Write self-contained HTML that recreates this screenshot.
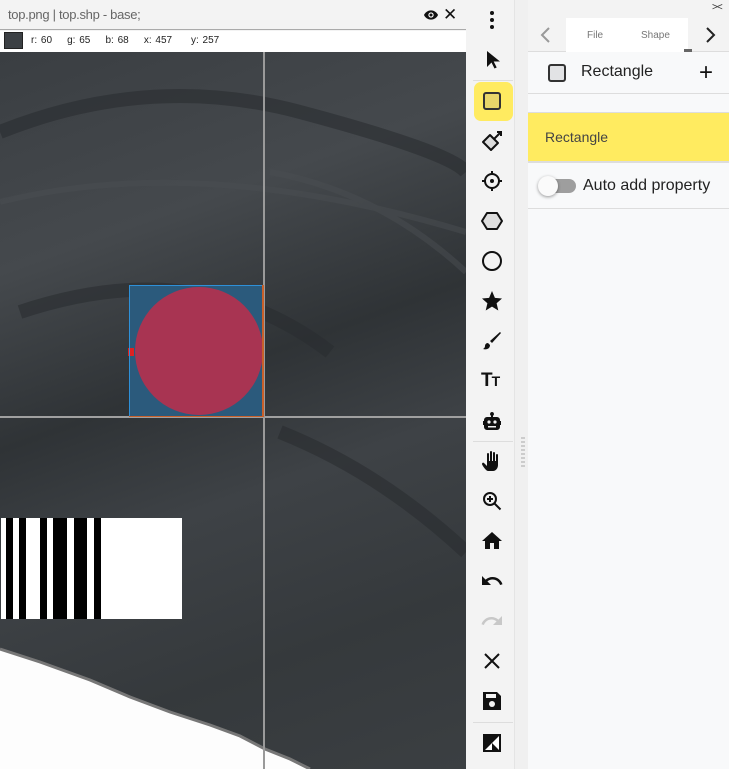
<!DOCTYPE html>
<html><head><meta charset="utf-8"><style>
*{margin:0;padding:0;box-sizing:border-box}
body{width:729px;height:769px;overflow:hidden;background:#f3f3f3;font-family:"Liberation Sans",sans-serif;position:relative}
.abs{position:absolute}
.ic{position:absolute;left:480px;width:24px;height:24px}
</style></head><body>
<div class="abs" style="left:0;top:0;width:466px;height:30px;background:#f3f3f3;border-bottom:1px solid #aaa"></div>
<div class="abs" style="left:8px;top:7px;font-size:13px;color:#666;letter-spacing:-0.3px">top.png | top.shp - base;</div>
<svg class="abs" style="left:422px;top:7px" width="18" height="16" viewBox="0 0 24 24"><path d="M12 5C7 5 3 8.5 1.5 12 3 15.5 7 19 12 19s9-3.5 10.5-7C21 8.5 17 5 12 5z" fill="#111"/><circle cx="12" cy="12" r="4" fill="#fff"/><circle cx="12" cy="12" r="2.3" fill="#111"/></svg>
<div class="abs" style="left:443px;top:5px;font-size:17px;color:#111">✕</div>
<div class="abs" style="left:0;top:31px;width:466px;height:21px;background:#fff"></div>
<div class="abs" style="left:4px;top:32px;width:19px;height:17px;background:#3c4044;border:1px solid #222"></div>
<div class="abs" style="left:31px;top:35px;font-size:10px;color:#222;word-spacing:1px">r: 60&nbsp;&nbsp;&nbsp;&nbsp;g: 65&nbsp;&nbsp;&nbsp;&nbsp;b: 68&nbsp;&nbsp;&nbsp;&nbsp;x: 457&nbsp;&nbsp;&nbsp;&nbsp;&nbsp;y: 257</div>
<div class="abs" style="left:0;top:52px;width:466px;height:717px;background:linear-gradient(160deg,#3a3e42 0%,#45494d 25%,#2f3336 45%,#3e4246 60%,#35393c 80%,#3b3f42 100%)"></div>
<svg class="abs" style="left:0;top:52px" width="466" height="717">
<g fill="none" stroke="#2a2d30" stroke-width="14" opacity="0.6">
<path d="M0 80 Q150 20 300 60 T466 120"/>
<path d="M20 260 Q200 200 330 300"/>
<path d="M280 380 Q380 420 466 500"/>
</g>
<g fill="none" stroke="#4a4e52" stroke-width="6" opacity="0.5">
<path d="M0 150 Q200 100 466 180"/>
<path d="M270 120 Q380 140 466 220"/>
</g>
<polygon points="0,597 40,610 90,628 130,645 170,660 210,673 240,684 265,697 290,707 310,717 0,717" fill="#fdfdfd"/>
<polyline points="0,597 40,610 90,628 130,645 170,660 210,673 240,684 265,697 290,707 310,717" fill="none" stroke="#777" stroke-width="3"/>
<rect x="1" y="466" width="181" height="101" fill="#fff"/>
<g fill="#000"><rect x="6" y="466" width="7" height="101"/><rect x="19" y="466" width="7" height="101"/><rect x="40" y="466" width="7" height="101"/><rect x="53" y="466" width="14" height="101"/><rect x="74" y="466" width="13" height="101"/><rect x="94" y="466" width="7" height="101"/></g>
<rect x="129" y="233" width="135" height="132" fill="#2b5a7c"/>
<ellipse cx="199" cy="299" rx="64" ry="64" fill="#a83452"/>
<rect x="128" y="296" width="6" height="8" fill="#d22"/>
<line x1="129.5" y1="233" x2="129.5" y2="365" stroke="#2e90d8"/>
<line x1="129" y1="233.5" x2="264" y2="233.5" stroke="#2e90d8"/>
<line x1="0" y1="365" x2="466" y2="365" stroke="#a0a0a0" stroke-width="2"/>
<line x1="264" y1="0" x2="264" y2="717" stroke="#9a9a9a" stroke-width="2"/>
<line x1="263" y1="233" x2="263" y2="365" stroke="#c8602a" stroke-width="2"/>
<line x1="129" y1="364.5" x2="264" y2="364.5" stroke="#c8602a"/>
</svg>
<div class="abs" style="left:466px;top:0;width:48px;height:769px;background:#f3f3f3"></div>
<div class="abs" style="left:514px;top:0;width:14px;height:769px;background:#f0f0f0;border-left:1px solid #e4e4e4"></div>
<div class="abs" style="left:521px;top:437px;width:4px;height:30px;background:repeating-linear-gradient(#ccc 0 2px,transparent 2px 4px)"></div>
<div class="abs" style="left:474px;top:82px;width:39px;height:39px;background:#ffeb60;border-radius:7px"></div>
<div class="abs" style="left:473px;top:80px;width:40px;height:1px;background:#ddd"></div>
<div class="abs" style="left:473px;top:441px;width:40px;height:1px;background:#ddd"></div>
<div class="abs" style="left:473px;top:722px;width:40px;height:1px;background:#ddd"></div>
<svg class="ic" style="top:8px" viewBox="0 0 24 24"><circle cx="12" cy="5" r="2" fill="#111"/><circle cx="12" cy="12" r="2" fill="#111"/><circle cx="12" cy="19" r="2" fill="#111"/></svg>
<svg class="ic" style="top:48px" viewBox="0 0 24 24"><path d="M7 3v16l4.5-4.5 3 6 2.2-1-3-6H20z" fill="#111"/></svg>
<svg class="ic" style="top:89px" viewBox="0 0 24 24"><rect x="4" y="4" width="16" height="16" rx="2" fill="#e8d66a" stroke="#333" stroke-width="2"/></svg>
<svg class="ic" style="top:129px" viewBox="0 0 24 24"><path d="M3 13l7-7 8 8-7 7z" fill="#ddd" stroke="#111" stroke-width="2" stroke-linejoin="round"/><path d="M14 10l7-7M17 3h4v4" stroke="#111" stroke-width="2" fill="none"/></svg>
<svg class="ic" style="top:169px" viewBox="0 0 24 24"><circle cx="12" cy="12" r="7" fill="none" stroke="#111" stroke-width="2"/><circle cx="12" cy="12" r="2" fill="#111"/><path d="M12 2v4M12 18v4M2 12h4M18 12h4" stroke="#111" stroke-width="2"/></svg>
<svg class="ic" style="top:209px" viewBox="0 0 24 24"><path d="M7 4h10l5 8-5 8H7l-5-8z" fill="#ddd" stroke="#111" stroke-width="2" stroke-linejoin="round"/></svg>
<svg class="ic" style="top:249px" viewBox="0 0 24 24"><circle cx="12" cy="12" r="9" fill="none" stroke="#111" stroke-width="2"/></svg>
<svg class="ic" style="top:289px" viewBox="0 0 24 24"><path d="M12 2l2.9 6.9 7.1.6-5.4 4.7 1.7 7.3L12 17.6 5.7 21.5l1.7-7.3L2 9.5l7.1-.6z" fill="#111"/></svg>
<svg class="ic" style="top:329px" viewBox="0 0 24 24"><path d="M20 3l1 1-9 10-2-2z" fill="#111"/><path d="M8 14c-2 0-3 1.5-3 3 0 1.5-1 2.5-2 3 3 1 7 0 7-4z" fill="#111"/></svg>
<div class="abs" style="left:481px;top:370px;font-size:19px;font-weight:bold;color:#111;letter-spacing:-1px">T<span style="font-size:14px">T</span></div>
<svg class="ic" style="top:409px" viewBox="0 0 24 24"><path d="M12 3a2 2 0 0 1 1 3.7V8h4a3 3 0 0 1 3 3v1h1v4h-1v2a3 3 0 0 1-3 3H7a3 3 0 0 1-3-3v-2H3v-4h1v-1a3 3 0 0 1 3-3h4V6.7A2 2 0 0 1 12 3z" fill="#111"/><circle cx="9" cy="13" r="1.6" fill="#f3f3f3"/><circle cx="15" cy="13" r="1.6" fill="#f3f3f3"/><rect x="8" y="17" width="8" height="1.5" fill="#f3f3f3"/></svg>
<svg class="ic" style="top:449px" viewBox="0 0 24 24"><path d="M8 22c-2 0-6-6-6-7s1-2 2-1l3 3V5a1 1 0 0 1 2 0v7h1V3a1 1 0 0 1 2 0v9h1V4a1 1 0 0 1 2 0v8h1V6a1 1 0 0 1 2 0v10c0 3-2 6-5 6z" fill="#111"/></svg>
<svg class="ic" style="top:489px" viewBox="0 0 24 24"><circle cx="10" cy="10" r="6" fill="none" stroke="#111" stroke-width="2"/><path d="M14.5 14.5l6 6M10 7v6M7 10h6" stroke="#111" stroke-width="2"/></svg>
<svg class="ic" style="top:529px" viewBox="0 0 24 24"><path d="M10 20v-6h4v6h5v-8h3L12 3 2 12h3v8z" fill="#111"/></svg>
<svg class="ic" style="top:569px" viewBox="0 0 24 24"><path d="M12.5 8c-2.6 0-5 1-6.9 2.6L2 7v9h9l-3.6-3.6c1.4-1.2 3.2-1.9 5.1-1.9 3.5 0 6.5 2.3 7.6 5.5l2.4-.8C21.1 11 17.2 8 12.5 8z" fill="#111"/></svg>
<svg class="ic" style="top:609px" viewBox="0 0 24 24"><path d="M11.5 8c2.6 0 5 1 6.9 2.6L22 7v9h-9l3.6-3.6c-1.4-1.2-3.2-1.9-5.1-1.9-3.5 0-6.5 2.3-7.6 5.5l-2.4-.8C2.9 11 6.8 8 11.5 8z" fill="#c8c8c8"/></svg>
<svg class="ic" style="top:649px" viewBox="0 0 24 24"><path d="M5 5l14 14M19 5L5 19" stroke="#111" stroke-width="2"/></svg>
<svg class="ic" style="top:689px" viewBox="0 0 24 24"><path d="M3 3h14l4 4v14H3z" fill="#111"/><circle cx="12" cy="15" r="3" fill="#f3f3f3"/><rect x="6" y="5" width="10" height="4" fill="#f3f3f3"/></svg>
<svg class="ic" style="top:731px" viewBox="0 0 24 24"><rect x="3" y="3" width="18" height="18" fill="#111"/><path d="M5 19L19 5v14z" fill="#fff"/><path d="M12 12l7 7H12z" fill="#111"/></svg>
<div class="abs" style="left:528px;top:0;width:201px;height:769px;background:#f8f9fa"></div>
<div class="abs" style="left:528px;top:0;width:201px;height:18px;background:#f3f3f3"></div>
<div class="abs" style="left:712px;top:2px;font-size:10px;color:#333;letter-spacing:-1px">&gt;&lt;</div>
<div class="abs" style="left:528px;top:18px;width:201px;height:34px;background:#f3f3f3;border-bottom:1px solid #ddd"></div>
<div class="abs" style="left:566px;top:18px;width:122px;height:34px;background:#fff"></div>
<svg class="abs" style="left:538px;top:26px" width="16" height="18" viewBox="0 0 16 18"><path d="M11 2L4 9l7 7" fill="none" stroke="#999" stroke-width="2"/></svg>
<svg class="abs" style="left:702px;top:26px" width="16" height="18" viewBox="0 0 16 18"><path d="M5 2l7 7-7 7" fill="none" stroke="#222" stroke-width="2"/></svg>
<div class="abs" style="left:587px;top:30px;font-size:10px;color:#777">File</div>
<div class="abs" style="left:641px;top:30px;font-size:10px;color:#777">Shape</div>
<div class="abs" style="left:684px;top:49px;width:8px;height:3px;background:#666"></div>
<div class="abs" style="left:548px;top:64px;width:18px;height:18px;border:2px solid #333;border-radius:3px;background:#e2e3e5"></div>
<div class="abs" style="left:581px;top:63px;font-size:16px;color:#222">Rectangle</div>
<div class="abs" style="left:699px;top:59px;font-size:24px;color:#111;font-weight:300">+</div>
<div class="abs" style="left:528px;top:93px;width:201px;height:1px;background:#ddd"></div>
<div class="abs" style="left:528px;top:112px;width:201px;height:51px;background:#ffeb60;border-top:1px solid #ddd;border-bottom:2px solid #ddd"></div>
<div class="abs" style="left:545px;top:129px;font-size:14px;color:#444">Rectangle</div>
<div class="abs" style="left:544px;top:179px;width:32px;height:14px;background:#9e9e9e;border-radius:7px"></div>
<div class="abs" style="left:538px;top:176px;width:20px;height:20px;background:#fafafa;border-radius:50%;box-shadow:0 1px 3px rgba(0,0,0,0.4)"></div>
<div class="abs" style="left:583px;top:177px;font-size:16px;color:#222">Auto add property</div>
<div class="abs" style="left:528px;top:208px;width:201px;height:1px;background:#ddd"></div>
</body></html>
